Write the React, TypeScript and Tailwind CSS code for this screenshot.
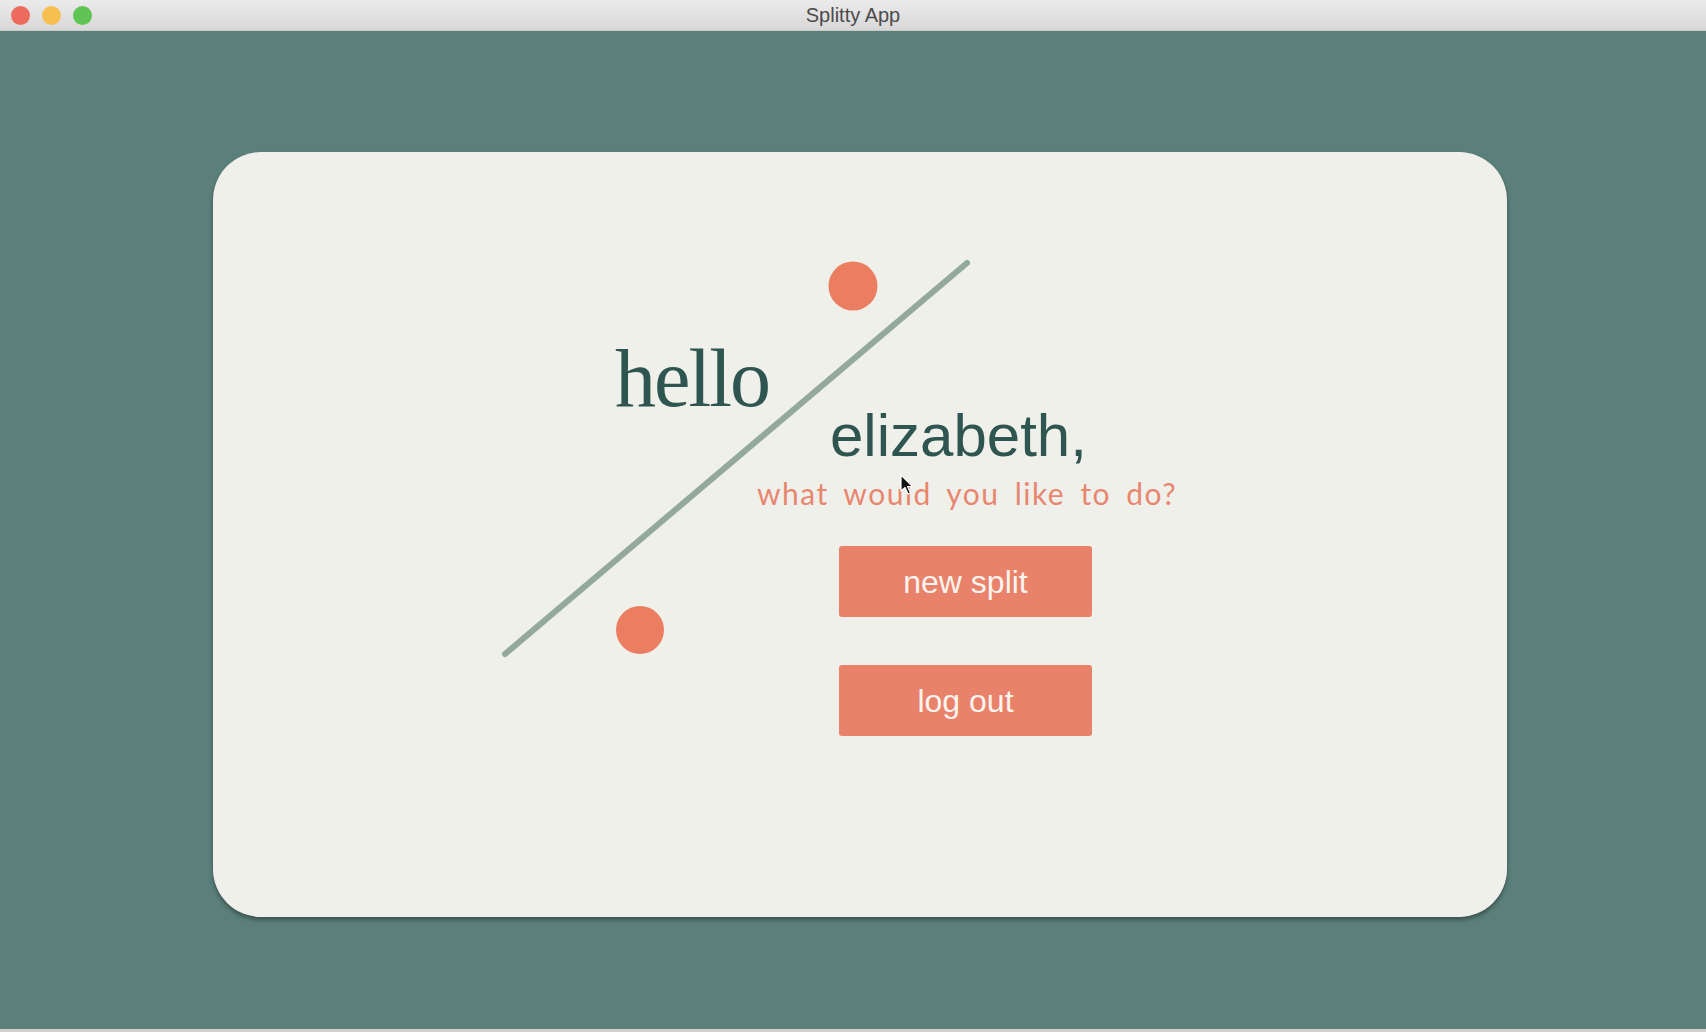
import React from "react";

const actions = ["new split", "log out"];

const TitleBar = () => (
  <div className="relative flex h-[31px] items-center border-b border-[#c9c9c9] bg-gradient-to-b from-[#ecebec] to-[#d9d8d9] px-[11px]">
    <div className="flex gap-[12px]">
      <span className="h-[19px] w-[19px] rounded-full bg-[#ee6b5f]" />
      <span className="h-[19px] w-[19px] rounded-full bg-[#f6bf4f]" />
      <span className="h-[19px] w-[19px] rounded-full bg-[#5fc454]" />
    </div>
    <div className="absolute inset-x-0 top-0 flex h-full items-center justify-center font-['Liberation_Sans',Arial,sans-serif] text-[20px] text-[#4b4b4b] pointer-events-none">
      Splitty App
    </div>
  </div>
);

const Decoration = () => (
  <svg className="absolute inset-0 h-full w-full" viewBox="0 0 1294 765" fill="none">
    <line x1="292" y1="502" x2="754" y2="111" stroke="#93aa9b" strokeWidth={6} strokeLinecap="round" />
    <circle cx="640" cy="134" r="24.5" fill="#eb7e60" />
    <circle cx="427" cy="478" r="24" fill="#eb7e60" />
  </svg>
);

const Cursor = () => (
  <svg className="absolute left-[900px] top-[474px] h-[22px] w-[15px]" viewBox="0 0 15 22">
    <path d="M1 1 L1 17 L5 13.5 L8 20 L10.5 19 L7.5 12.5 L12.5 12.5 Z" fill="#111" stroke="#fff" strokeWidth={1.2} strokeLinejoin="round" />
  </svg>
);

export default function App() {
  return (
    <div className="relative h-[1032px] w-[1706px] overflow-hidden border-b-[3px] border-[#cfcfcf] bg-[#5b7f7a]">
      <TitleBar />
      <div className="pl-[213px] pt-[121px]">
        <div className="relative h-[765px] w-[1294px] rounded-[48px] bg-[#f0f0eb] pl-[544px] pt-[254px] shadow-[0_3px_4px_rgba(0,0,0,0.35)]">
          <Decoration />
          <h1 className="absolute left-[402px] top-[186px] font-['Liberation_Serif',Georgia,serif] text-[82px] leading-none tracking-[-2px] text-[#2e5550]">
            hello
          </h1>
          <div className="relative flex w-[440px] flex-col items-start">
            <h2 className="ml-[73px] font-['Liberation_Sans',Arial,sans-serif] text-[60px] leading-none text-[#2e5550]">
              elizabeth,
            </h2>
            <p className="mt-[12px] whitespace-nowrap font-['Lato',sans-serif] text-[30px] leading-none tracking-[1.5px] [word-spacing:6px] text-[#e8866f]">
              what would you like to do?
            </p>
            <div className="ml-[82px] mt-[38px] flex flex-col gap-[48px]">
              {actions.map((label) => (
                <button
                  key={label}
                  className="flex h-[71px] w-[253px] items-center justify-center rounded-[3px] bg-[#e9826a] font-['Liberation_Sans',Arial,sans-serif] text-[32px] text-[#faf3ee]"
                >
                  {label}
                </button>
              ))}
            </div>
          </div>
        </div>
      </div>
      <Cursor />
    </div>
  );
}
